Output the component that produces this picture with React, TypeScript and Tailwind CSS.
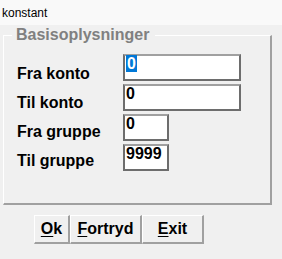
import React from 'react';

const labels = ['Fra konto', 'Til konto', 'Fra gruppe', 'Til gruppe'];

const Field = ({ value, wide, selected }: { value: string; wide?: boolean; selected?: boolean }) => (
  <div
    className={`h-[27px] mb-[3px] bg-white border-2 border-[#6d6d6d] border-t-[#a0a0a0] pl-[1px] text-[16px] leading-4 font-bold text-black ${
      wide ? 'w-[118px]' : 'w-[46px]'
    }`}
  >
    {selected ? <span className="bg-[#0078d7] text-white px-[1px]">{value}</span> : value}
  </div>
);

const Btn = ({ first, rest, w }: { first: string; rest: string; w: string }) => (
  <button
    className={`h-[29px] ${w} bg-[#f0f0f0] border-t border-l border-white border-r-2 border-b-2 border-r-[#a0a0a0] border-b-[#a0a0a0] text-[16px] leading-[18px] font-bold text-black`}
  >
    <span className="underline underline-offset-2">{first}</span>
    {rest}
  </button>
);

export default function App() {
  return (
    <div
      className="w-[282px] h-[259px] bg-[#f0f0f0] overflow-hidden"
      style={{ fontFamily: '"Liberation Sans", Arial, sans-serif' }}
    >
      {/* titel */}
      <div className="h-[25px] bg-[#f9f9f9] pl-[2px] pt-[6px] text-[12px] leading-[14px] text-black">konstant</div>

      {/* gruppe */}
      <fieldset className="mt-[1px] ml-[3px] w-[269px] h-[179px] pl-[8px] border-t border-l border-white border-r-2 border-b-2 border-r-[#a0a0a0] border-b-[#a0a0a0]">
        <legend className="pl-[4px] pr-[6px] text-[16px] leading-[18px] font-bold text-[#808080]">
          Basisoplysninger
        </legend>
        <div className="flex">
          <div className="ml-[5px] mt-[15px] w-[106px] text-[16px] leading-[29px] font-bold text-black">
            {labels.map(l => (
              <div key={l}>{l}</div>
            ))}
          </div>
          <div className="mt-[10px] flex flex-col">
            <Field value="0" wide selected />
            <Field value="0" wide />
            <Field value="0" />
            <Field value="9999" />
          </div>
        </div>
      </fieldset>

      {/* knapper */}
      <div className="flex ml-[34px] mt-[10px]">
        <Btn first="O" rest="k" w="w-[36px]" />
        <Btn first="F" rest="ortryd" w="w-[72px]" />
        <Btn first="E" rest="xit" w="w-[62px]" />
      </div>
    </div>
  );
}
